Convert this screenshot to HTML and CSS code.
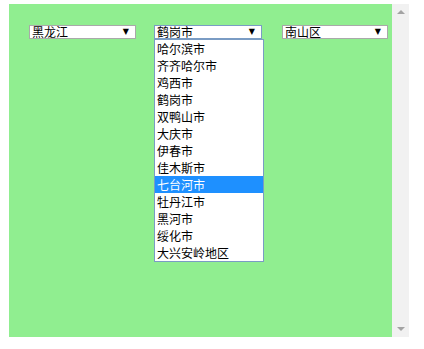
FILE: index.html
```html
<!DOCTYPE html>
<html lang="zh-CN">
<head>
	<meta charset="UTF-8">
	<title>省市区三级联动</title>
<link rel="stylesheet" href="styles.css">
</head>
<body>
<div id="frame">
	<div id="stage">
		<div class="sel">
			<span class="val">黑龙江</span>
			<span class="arr">&#9660;</span>
		</div>
		<div class="sel open">
			<span class="val">鹤岗市</span>
			<span class="arr">&#9660;</span>
			<ul class="list">
				<li>哈尔滨市</li>
				<li>齐齐哈尔市</li>
				<li>鸡西市</li>
				<li>鹤岗市</li>
				<li>双鸭山市</li>
				<li>大庆市</li>
				<li>伊春市</li>
				<li>佳木斯市</li>
				<li class="on">七台河市</li>
				<li>牡丹江市</li>
				<li>黑河市</li>
				<li>绥化市</li>
				<li>大兴安岭地区</li>
			</ul>
		</div>
		<div class="sel last">
			<span class="val">南山区</span>
			<span class="arr">&#9660;</span>
		</div>
	</div>
	<div id="bar">
		<span class="up"></span>
		<span class="down"></span>
	</div>
</div>
</body>
</html>
```

FILE: styles.css
```css
*{padding:0;margin:0;list-style:none;}
body{
	background:#fff;
	font-family:"Noto Sans CJK SC","Microsoft YaHei",sans-serif;
	font-size:12px;
	color:#000;
}
/*外框*/
#frame{
	width:400px;
	height:333px;
	margin:4px 0 0 9px;
	display:flex;
}
#stage{
	flex:1;
	background:#90ee90;
	padding:21px 0 0 20px;
	display:flex;
	align-items:flex-start;
	gap:18px;
}
/*下拉框*/
.sel{
	width:107px;
	height:14px;
	background:#fff;
	border:1px solid #a9a9a9;
	box-sizing:border-box;
	position:relative;
	display:flex;
	align-items:center;
	justify-content:space-between;
	padding:0 6px 0 2px;
	line-height:12px;
}
.sel .val{
	font-size:12px;
}
.sel .arr{
	font-family:"DejaVu Sans",sans-serif;
	font-size:8px;
}
.open{
	width:108px;
	border-color:#7a9cc4;
}
.last{
	margin-left:2px;
	width:106px;
}
.list{
	position:absolute;
	left:-1px;
	top:13px;
	width:108px;
	background:#fff;
	border:1px solid #7a9cc4;
	z-index:5;
}
.list li{
	height:17px;
	line-height:17px;
	padding-left:2px;
	white-space:nowrap;
}
.list li.on{
	background:#1e90ff;
	color:#fff;
}
/*滚动条*/
#bar{
	width:17px;
	background:#f1f1f1;
	display:flex;
	flex-direction:column;
	justify-content:space-between;
	align-items:center;
	padding:6px 0 6px;
	box-sizing:border-box;
}
#bar span{
	width:0;
	height:0;
	border-left:4px solid transparent;
	border-right:4px solid transparent;
}
#bar .up{
	border-bottom:4px solid #a3a3a3;
}
#bar .down{
	border-top:4px solid #a3a3a3;
}
```
